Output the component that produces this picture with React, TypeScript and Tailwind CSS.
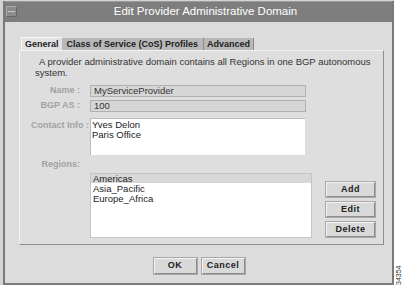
import React from "react";

const font = { fontFamily: '"Liberation Sans", Arial, sans-serif' };

function Btn({ label, w, h }: { label: string; w: string; h: string }) {
  return (
    <div
      className={`${w} ${h} flex items-center justify-center border border-t-[#f4f4f4] border-l-[#f4f4f4] border-r-[#8c8c8c] border-b-[#8c8c8c] bg-[#d9d9d9] text-[9px] font-bold text-[#222] outline outline-1 outline-[#a8a8a8] tracking-[0.5px]`}
    >
      {label}
    </div>
  );
}

export default function App() {
  return (
    <div className="w-[404px] h-[287px] bg-white flex text-[#222]" style={font}>
      <div className="w-[394px] h-[285px] bg-[#d4d4d4] pl-[3px] pt-[1px] flex">
        <div className="flex-1 flex flex-col border-l-2 border-r-2 border-b-2 border-[#7a7a7a] bg-[#dcdcdc]">
          {/* title bar */}
          <div className="h-[21px] bg-[#7e7e7e] border-t border-[#9a9a9a] flex items-center relative">
            <div className="absolute left-[1px] top-[4px] w-[11px] h-[11px] bg-[#8c8c8c] border border-t-[#a8a8a8] border-l-[#a8a8a8] border-r-[#666] border-b-[#666] flex items-center justify-center">
              <div className="w-[7px] h-[1px] bg-[#c8c8c8]" />
            </div>
            <div className="flex-1 text-center text-white text-[11.5px] leading-none pl-[14px]">
              Edit Provider Administrative Domain
            </div>
          </div>

          {/* body */}
          <div className="flex-1 flex flex-col pl-[14px] pr-[5px] pt-[16px]">
            {/* tabs */}
            <div className="flex h-[12px] items-end pl-[2px]">
              <div className="h-[13px] px-[3px] bg-[#e2e2e2] border-t border-l border-[#f6f6f6] text-[9px] font-bold leading-[12px] flex items-center">
                General
              </div>
              <div className="h-[12px] px-[5px] bg-[#b8b8b8] border-r border-[#8a8a8a] text-[9px] font-bold leading-[12px] flex items-center">
                Class of Service (CoS) Profiles
              </div>
              <div className="h-[12px] px-[3px] bg-[#b8b8b8] border-r border-[#8a8a8a] text-[9px] font-bold leading-[12px] flex items-center">
                Advanced
              </div>
            </div>
            {/* panel */}
            <div className="w-[365px] h-[195px] bg-[#dedede] border border-t-[#f2f2f2] border-l-[#f2f2f2] border-r-[#8e8e8e] border-b-[#8e8e8e] flex flex-col pl-[15px] pt-[5px]">
              <div className="text-[9.5px] leading-[11px] text-[#333] w-[345px] whitespace-nowrap">
                <span className="pl-[4px]">A provider administrative domain contains all Regions in one BGP autonomous</span>
                <br />
                system.
              </div>
              <div className="flex items-center mt-[7px] h-[12px]">
                <div className="w-[45px] text-right text-[9px] font-bold text-[#a2a2a2] whitespace-nowrap">Name :</div>
                <div className="ml-[10px] w-[216px] h-[12px] border border-[#b0b0b0] bg-[#d6d6d6] text-[9.5px] leading-[10px] pl-[3px] text-[#333]">
                  MyServiceProvider
                </div>
              </div>
              <div className="flex items-center mt-[3px] h-[12px]">
                <div className="w-[45px] text-right text-[9px] font-bold text-[#a2a2a2] whitespace-nowrap">BGP AS :</div>
                <div className="ml-[10px] w-[216px] h-[12px] border border-[#b0b0b0] bg-[#d6d6d6] text-[9.5px] leading-[10px] pl-[3px] text-[#333]">
                  100
                </div>
              </div>
              <div className="flex items-start mt-[6px]">
                <div className="w-[49px] -ml-[4px] text-right text-[9px] font-bold text-[#a2a2a2] whitespace-nowrap mt-[1px]">Contact Info :</div>
                <div className="ml-[10px] w-[215px] h-[37px] bg-white border-t border-l border-[#bcbcbc] text-[9.5px] leading-[10px] pl-[1px] pt-[1px] text-[#222]">
                  Yves Delon
                  <br />
                  Paris Office
                </div>
              </div>
              <div className="mt-[4px] w-[45px] text-right text-[9px] font-bold text-[#a2a2a2] h-[10px] leading-[10px]">Regions:</div>
              <div className="flex mt-[4px]">
                <div className="ml-[55px] w-[222px] h-[65px] bg-white border border-[#c4c4c4] text-[9.5px] text-[#222]">
                  <div className="bg-[#d8d8d8] pl-[2px] h-[9px] leading-[10px]">Americas</div>
                  <div className="pl-[2px] h-[10px] leading-[11px]">Asia_Pacific</div>
                  <div className="pl-[2px] h-[10px] leading-[11px]">Europe_Africa</div>
                </div>
                <div className="ml-[14px] mt-[9px] flex flex-col gap-[5px]">
                  <Btn label="Add" w="w-[49px]" h="h-[15px]" />
                  <Btn label="Edit" w="w-[49px]" h="h-[15px]" />
                  <Btn label="Delete" w="w-[49px]" h="h-[15px]" />
                </div>
              </div>
            </div>
            {/* OK / Cancel */}
            <div className="flex justify-center gap-[5px] mt-[13px] pr-[8px]">
              <Btn label="OK" w="w-[43px]" h="h-[16px]" />
              <Btn label="Cancel" w="w-[43px]" h="h-[16px]" />
            </div>
          </div>
        </div>
      </div>
      <div className="flex-1 relative">
        <div className="absolute left-[1px] bottom-[2px] text-[7px] leading-none text-[#333] origin-bottom-left -rotate-90 translate-x-[7px] whitespace-nowrap">
          34354
        </div>
      </div>
    </div>
  );
}
